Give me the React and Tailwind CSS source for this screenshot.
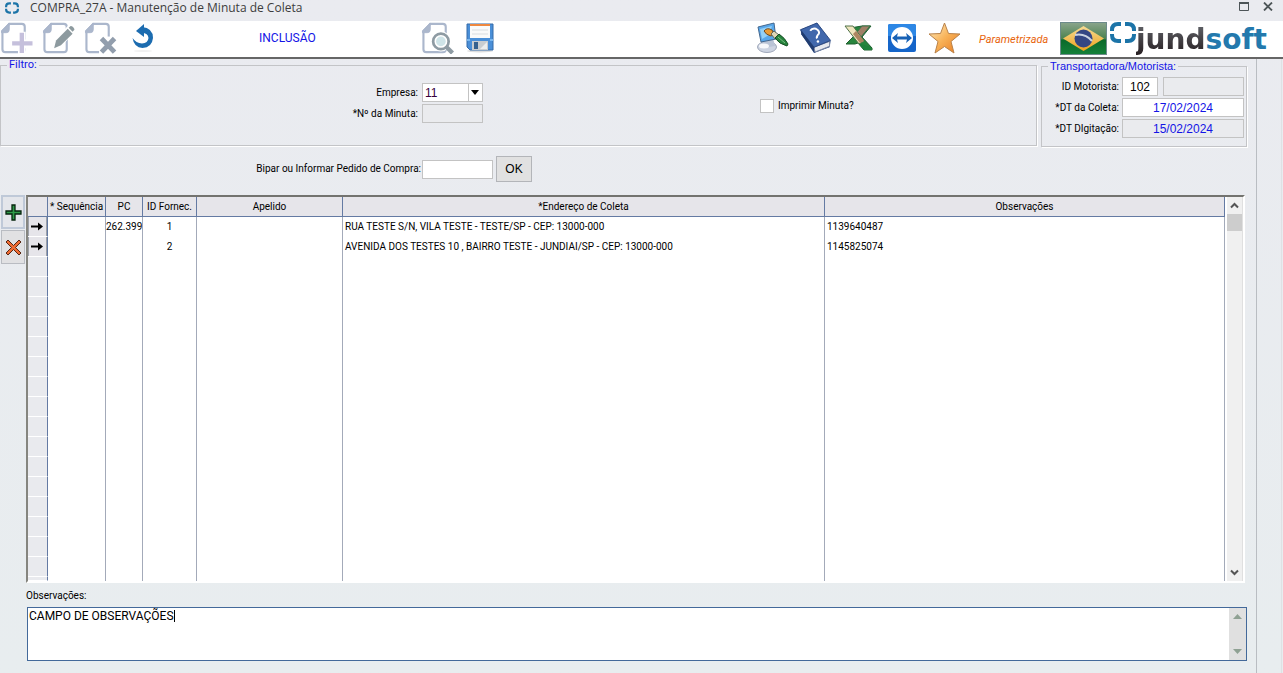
import React from 'react';

const narrow = "font-['Roboto',sans-serif]";

function Page({ children }) {
  return (
    <svg viewBox="0 0 33 33" className="h-8 w-[33px]">
      <path d="M9 2H22Q25 2 25 5V28Q25 31 22 31H5Q2 31 2 28V10Z" fill="#fff" stroke="#abb7cc" strokeWidth="2.2" />
      <path d="M9 1V8Q9 11 6 11H1V9Z" fill="#abb7cc" stroke="#abb7cc" strokeWidth="1" />
      {children}
    </svg>
  );
}

function NewIcon() {
  return (
    <Page>
      <path d="M18 10H26V18H33V27H26V33H18V27H11V18H18Z" fill="#fff" />
      <path d="M22 11V32M12 22H33" stroke="#c5c0dc" strokeWidth="4.5" fill="none" />
    </Page>
  );
}

function EditIcon() {
  return (
    <Page>
      <path d="M11 28L12 19L27 3L34 9L19 26Z" fill="#fff" />
      <path d="M12 27L14 19L26 7L31 12L19 24Z" fill="#8d9a9f" />
      <path d="M27 6L29 4Q32 4 33 8L31 10Z" fill="#8d9a9f" />
    </Page>
  );
}

function RemoveIcon() {
  return (
    <Page>
      <path d="M15 15H33V33H15Z" fill="#fff" />
      <path d="M17.500 17L31 31M31 17L17.500 31" stroke="#929ead" strokeWidth="5" fill="none" />
    </Page>
  );
}

function PreviewIcon() {
  return (
    <Page>
      <circle cx="20" cy="20" r="10.5" fill="#fff" />
      <path d="M25 25L32 32" stroke="#8e9ba3" strokeWidth="4.5" />
      <circle cx="20" cy="20" r="8" fill="#fff" stroke="#8e9ba3" strokeWidth="2.8" />
      <circle cx="20" cy="20" r="5" fill="#cfe4e8" />
    </Page>
  );
}

function UndoIcon() {
  return (
    <svg viewBox="0 0 24 28" className="h-7 w-6">
      <ellipse cx="12" cy="27" rx="9" ry="1" fill="#f1f1f1" />
      <path d="M11 3Q22 4 22 14Q21 23.500 11.500 24Q3 23.500 1.500 14Q5 19 11 19.500Q17 19 17.500 14Q17 9 11 9Z" fill="#1c6cb0" />
      <path d="M5 7L13 0V13Z" fill="#1c6cb0" />
    </svg>
  );
}

function SaveIcon() {
  return (
    <svg viewBox="0 0 28 30" className="h-[30px] w-7">
      <ellipse cx="14" cy="28" rx="13" ry="1.5" fill="#ddd" />
      <path d="M1 1H27V27H4L1 24Z" fill="#4a8fd8" stroke="#356ba8" />
      <path d="M4 1H24V15H4Z" fill="#fafafa" />
      <path d="M4 1H24V3H4Z" fill="#ee873e" />
      <path d="M6 7H22M6 11H22" stroke="#dadde0" />
      <path d="M6 18H22V27H6Z" fill="#c9cdd0" />
      <path d="M8 19H12V26H8Z" fill="#35618f" />
      <path d="M14 26L21 19V26Z" fill="#eceeee" />
      <path d="M1 17H4M24 17H27" stroke="#79b7ef" strokeWidth="2" />
    </svg>
  );
}

function PaintIcon() {
  return (
    <svg viewBox="0 0 33 32" className="h-8 w-[33px]">
      <ellipse cx="11" cy="25" rx="9.500" ry="5.5" fill="#cdd4e2" stroke="#a0a8ba" />
      <path d="M6 18L17 16L19 24L7 26Z" fill="#bac4d6" />
      <ellipse cx="8" cy="24" rx="5" ry="2.500" fill="#f7f8fb" />
      <path d="M2 5L18 1L20 17L5 20Z" fill="#58a7ea" stroke="#44678e" />
      <path d="M4 7L16 4L13 13L6 17Z" fill="#94d0f6" />
      <path d="M8 9Q11 5 16 8L18 12L15 14Q10 13 8 9Z" fill="#e89b35" stroke="#704a1d" />
      <path d="M15 12L18 9L23 13L19 17Z" fill="#ded6b5" stroke="#5f665f" />
      <path d="M19 16L23 12Q29 16 32 22L31 24Q23 22 19 16Z" fill="#26843d" stroke="#174d24" />
      <path d="M22 15L29 21" stroke="#78bb7f" />
    </svg>
  );
}

function BookIcon() {
  return (
    <svg viewBox="0 0 33 33" className="h-8 w-[33px]">
      <path d="M1 8L18 1L32 20L31 26L15 32L2 13Z" fill="#294780" />
      <path d="M15 26L31 20V25L16 31Z" fill="#e6e9ef" stroke="#7d89a5" />
      <path d="M1 8L18 1L32 19L15 26Z" fill="#4168ac" stroke="#2c4a82" />
      <path d="M2 9L15 26V31L2 13Z" fill="#203c70" />
      <path d="M11 9Q13 6 17 7Q21 9 20 12Q17 15 18 17" fill="none" stroke="#fff" strokeWidth="2" />
      <circle cx="19" cy="20" r="1.3" fill="#fff" />
    </svg>
  );
}

function SheetIcon() {
  return (
    <svg viewBox="0 0 30 28" className="h-7 w-[30px]">
      <path d="M18 2H27L18 13L28 24V26H20L14 19L11 20H2L10 12L6 4Z" fill="#27853d" stroke="#1e5e2d" />
      <path d="M18 2H26L17 13L13 8Z" fill="#a08067" stroke="#3e704a" />
      <path d="M1 2H9L20 17L15 20Z" fill="#eee4bd" stroke="#50734a" />
      <path d="M12 7L20 17L16 19L9 10Z" fill="#ad8561" />
      <path d="M17 20L27 23L28 26H20L15 20Z" fill="#1f813b" />
    </svg>
  );
}

function RemoteIcon() {
  return (
    <svg viewBox="0 0 28 28" className="size-7">
      <rect width="28" height="28" rx="2" fill="#1565c9" />
      <path d="M2 0H26Q28 0 28 2V12H0V2Q0 0 2 0Z" fill="#2d87e5" />
      <circle cx="14" cy="14" r="11" fill="#fff" />
      <path d="M4 14L10 9L9 12.500H19L18 9L24 14L18 19L19 15.500H9L10 19Z" fill="#1761b5" />
    </svg>
  );
}

function StarIcon() {
  return (
    <svg viewBox="0 0 33 32" className="h-8 w-[33px]">
      <defs>
        <linearGradient id="star" x1="0" y1="0" x2="1" y2="1">
          <stop offset="0" stopColor="#fff0c6" />
          <stop offset=".5" stopColor="#f8b258" />
          <stop offset="1" stopColor="#e8791f" />
        </linearGradient>
      </defs>
      <path d="M16.500 1L20.500 11.500L32 12L23 19.500L26 31L16.500 24.500L7 31L10 19.500L1 12L12.500 11.500Z" fill="url(#star)" stroke="#b9824a" />
    </svg>
  );
}

function FlagIcon() {
  return (
    <svg viewBox="0 0 47 33" className="h-[33px] w-[47px]">
      <defs>
        <linearGradient id="flag" x1="0" y1="0" x2="0" y2="1">
          <stop offset="0" stopColor="#8aa58c" />
          <stop offset=".5" stopColor="#4d8350" />
          <stop offset=".55" stopColor="#0b6a2b" />
          <stop offset="1" stopColor="#15813a" />
        </linearGradient>
        <linearGradient id="diamond" x1="0" y1="0" x2="0" y2="1">
          <stop offset="0" stopColor="#f7dc94" />
          <stop offset="1" stopColor="#eca21d" />
        </linearGradient>
      </defs>
      <rect x=".5" y=".5" width="46" height="32" fill="url(#flag)" stroke="#6d8b8b" />
      <path d="M23.500 4L44 16.500L23.500 29L3 16.500Z" fill="url(#diamond)" />
      <circle cx="23.500" cy="16.500" r="9" fill="#344783" />
      <path d="M15 13Q25 11 32 19" fill="none" stroke="#cbd4e1" strokeWidth="2" />
    </svg>
  );
}

function Mark({ className }) {
  return (
    <svg viewBox="0 0 26 21" className={className} fill="none" stroke="#1c74a8" strokeWidth="4">
      <path d="M11 2H8Q2 2 2 8V9M15 2H18Q24 2 24 8V9M2 12V13Q2 19 8 19H11M24 12V13Q24 19 18 19H15" />
    </svg>
  );
}

function ToolButton({ label, className = 'w-[33px]', children }) {
  return (
    <button type="button" aria-label={label} className={`flex h-8 shrink-0 items-center justify-center ${className}`}>
      {children}
    </button>
  );
}

const field = 'h-[19px] min-w-0 rounded-none border border-[#c3c3c3] text-[12px] leading-4 outline-none';
const th = 'overflow-hidden border-r border-b border-[#647aa3] bg-[#e6e5ea] p-0 font-normal whitespace-nowrap';
const td = 'overflow-hidden border-r border-[#a3aab9] p-0 whitespace-nowrap';

const rows = [
  { pc: '262.399', id: '1', address: 'RUA TESTE S/N, VILA TESTE - TESTE/SP - CEP: 13000-000', notes: '1139640487' },
  { pc: '', id: '2', address: 'AVENIDA DOS TESTES 10 , BAIRRO TESTE - JUNDIAI/SP - CEP: 13000-000', notes: '1145825074' },
];
const blanks = Array.from({ length: 17 }, (_, i) => i);

function Grid() {
  return (
    <div className="flex min-w-0 flex-1 border-2 border-t-[#73736f] border-r-white border-b-white border-l-[#85857f] bg-white">
      <div className="min-w-0 flex-1">
        <table className={`w-full table-fixed border-separate border-spacing-0 text-[10px] leading-4 ${narrow}`}>
          <colgroup>
            <col className="w-5" />
            <col className="w-[58px]" />
            <col className="w-[37px]" />
            <col className="w-[54px]" />
            <col className="w-[146px]" />
            <col className="w-[482px]" />
            <col />
          </colgroup>
          <thead>
            <tr className="h-5">
              <th className={th} aria-label="Seleção" />
              <th className={th}>* Sequência</th>
              <th className={th}>PC</th>
              <th className={th}>ID Fornec.</th>
              <th className={th}>Apelido</th>
              <th className={th}>*Endereço de Coleta</th>
              <th className={th}>Observações</th>
            </tr>
          </thead>
          <tbody>
            {rows.map((row) => (
              <tr key={row.id} className="h-5">
                <td className="border-r border-b border-r-[#647aa3] border-b-white bg-[#e6e5ea] p-0">
                  <svg viewBox="0 0 19 19" className="block h-[19px] w-[19px]">
                    <path d="M.5 0V19M18.500 0V19" stroke="#9da1a9" />
                    <path d="M3 9.500H12" stroke="#000" strokeWidth="2" />
                    <path d="M10 5.500L15 9.500L10 13.500Z" />
                  </svg>
                </td>
                <td className={td} />
                <td className={`${td} text-center`}>{row.pc}</td>
                <td className={`${td} text-center`}>{row.id}</td>
                <td className={td} />
                <td className={`${td} pl-0.5`}>{row.address}</td>
                <td className={`${td} pl-0.5`}>{row.notes}</td>
              </tr>
            ))}
            {blanks.map((i) => (
              <tr key={i} className="h-5 last:h-1">
                <td className="border-r border-b border-r-[#647aa3] border-b-white bg-[#e9eaee] p-0" />
                <td className={td} />
                <td className={td} />
                <td className={td} />
                <td className={td} />
                <td className={td} />
                <td className={td} />
              </tr>
            ))}
          </tbody>
        </table>
      </div>
      <div className="ml-0.5 flex w-4 flex-col border-r border-[#e0e0e0] bg-[#f0f0f0]">
        <button type="button" aria-label="Rolar para cima" className="flex h-[17px] items-center justify-center">
          <svg viewBox="0 0 9 7" className="h-[7px] w-[9px]" fill="none" stroke="#555" strokeWidth="2">
            <path d="M1 5.500L4.500 2L8 5.500" />
          </svg>
        </button>
        <div className="h-[17px] bg-[#cdcdcd]" />
        <div className="flex-1" />
        <button type="button" aria-label="Rolar para baixo" className="flex h-[17px] items-center justify-center">
          <svg viewBox="0 0 9 7" className="h-[7px] w-[9px]" fill="none" stroke="#555" strokeWidth="2">
            <path d="M1 1.500L4.500 5L8 1.500" />
          </svg>
        </button>
      </div>
    </div>
  );
}

export default function App() {
  return (
    <div className="flex min-h-screen flex-col bg-linear-to-b from-[#eaebf0] to-[#e8edef] font-['Liberation_Sans',Arial,sans-serif] text-[11px] leading-4 text-black">
      <header className="flex h-[21px] items-start">
        <Mark className="mt-0.5 ml-[5px] h-3 w-[14px]" />
        <h1 className="ml-[11px] font-['Open_Sans',sans-serif] text-[12px] leading-4 text-[#3d3d3d]">
          COMPRA_27A - Manutenção de Minuta de Coleta
        </h1>
        <button type="button" aria-label="Maximizar" className="mt-0.5 ml-auto">
          <svg viewBox="0 0 10 9" className="h-[9px] w-2.5">
            <path d="M.5 1V8.500H9.500V1" fill="none" stroke="#4d5558" />
            <path d="M0 1H10" stroke="#4d5558" strokeWidth="2" />
          </svg>
        </button>
        <button type="button" aria-label="Fechar" className="mt-0.5 mr-2.5 ml-[14px]">
          <svg viewBox="0 0 10 9" className="h-[9px] w-2.5">
            <path d="M1 .5L9 8.500M9 .5L1 8.500" stroke="#4d5558" strokeWidth="1.8" />
          </svg>
        </button>
      </header>

      <div className="flex h-[38px] items-start border-b-2 border-[#666] bg-white pt-px pr-4">
        <div className="flex gap-[9px]">
          <ToolButton label="Incluir"><NewIcon /></ToolButton>
          <ToolButton label="Alterar"><EditIcon /></ToolButton>
          <ToolButton label="Excluir"><RemoveIcon /></ToolButton>
          <ToolButton label="Desfazer"><UndoIcon /></ToolButton>
        </div>
        <span className={`ml-[100px] w-[162px] pt-2 text-[12px] text-[#1414e6] ${narrow}`}>INCLUSÃO</span>
        <div className="flex gap-3">
          <ToolButton label="Visualizar"><PreviewIcon /></ToolButton>
          <ToolButton label="Salvar" className="w-7"><SaveIcon /></ToolButton>
        </div>
        <div className="ml-auto flex items-start">
          <div className="flex gap-[10px]">
            <ToolButton label="Personalizar"><PaintIcon /></ToolButton>
            <ToolButton label="Ajuda"><BookIcon /></ToolButton>
            <ToolButton label="Exportar"><SheetIcon /></ToolButton>
            <ToolButton label="Acesso remoto"><RemoteIcon /></ToolButton>
            <ToolButton label="Favoritos"><StarIcon /></ToolButton>
          </div>
          <span className={`ml-[18px] w-[81px] pt-2.5 text-[11px] text-[#e8640c] italic ${narrow}`}>Parametrizada</span>
          <FlagIcon />
          <div className="ml-[3px] flex h-[33px] items-start">
            <Mark className="h-[21px] w-[26px]" />
            <span className="pt-0.5 font-['DejaVu_Sans',sans-serif] text-[28px] leading-8 font-bold text-[#2379ad]">
              <span className="bg-linear-to-b from-[#64676d] to-[#251d20] bg-clip-text text-transparent">jund</span>soft
            </span>
          </div>
        </div>
      </div>

      <div className="flex flex-1">
        <main className="min-w-0 flex-1 border-r border-[#b9bdc2]">
          <div className="flex gap-1 pr-[9px]">
            <fieldset className="h-[87px] min-w-0 flex-1 border border-[#c3c4c7] shadow-[1px_1px_0_#fff]">
              <legend className={`ml-1.5 h-3 px-0.5 leading-3 text-[#1414e6] ${narrow}`}>Filtro:</legend>
              <div className={`flex pt-3 text-[10px] ${narrow}`}>
                <div className="grid w-[482px] grid-cols-[1fr_61px] items-center gap-x-1 gap-y-0.5 text-right">
                  <label htmlFor="company">Empresa:</label>
                  <div className="relative">
                    <select id="company" className={`${field} block w-full appearance-none bg-white pl-0.5 font-['Liberation_Sans',sans-serif] text-[#37003c]`}>
                      <option>11</option>
                    </select>
                    <svg viewBox="0 0 14 17" className="pointer-events-none absolute top-px right-px h-[17px] w-[14px]">
                      <path d="M.5 0V17" stroke="#c3c3c3" />
                      <path d="M3 6H11L7 11Z" />
                    </svg>
                  </div>
                  <label htmlFor="number">*Nº da Minuta:</label>
                  <input id="number" disabled className={`${field} w-full bg-[#eaebee]`} />
                </div>
                <label className="ml-[277px] flex items-center gap-1 pt-1.5">
                  <input type="checkbox" className="size-[14px] appearance-none border border-[#c3c3c3] bg-white checked:bg-[#647aa3]" />
                  Imprimir Minuta?
                </label>
              </div>
            </fieldset>
            <fieldset className="h-[88px] w-[206px] border border-[#c3c4c7] shadow-[1px_1px_0_#fff]">
              <legend className="ml-1.5 h-[14px] px-0.5 leading-[14px] text-[#1414e6]">Transportadora/Motorista:</legend>
              <div className={`grid grid-cols-[1fr_122px] items-center gap-x-[3px] gap-y-0.5 pt-1 pr-0.5 text-right text-[10px] ${narrow}`}>
                <label htmlFor="driver">ID Motorista:</label>
                <div className="flex gap-[5px] font-['Liberation_Sans',sans-serif]">
                  <input id="driver" defaultValue="102" className={`${field} w-9 bg-white text-center`} />
                  <input aria-label="Nome do motorista" disabled className={`${field} flex-1 bg-[#eaebee]`} />
                </div>
                <label htmlFor="pickup">*DT da Coleta:</label>
                <input id="pickup" defaultValue="17/02/2024" className={`${field} w-full bg-white text-center font-['Liberation_Sans',sans-serif] text-[#1414e6]`} />
                <label htmlFor="typed">*DT DIgitação:</label>
                <input id="typed" readOnly defaultValue="15/02/2024" className={`${field} w-full bg-[#eaebee] text-center font-['Liberation_Sans',sans-serif] text-[#1414e6]`} />
              </div>
            </fieldset>
          </div>

          <form className="mt-[9px] flex items-center" onSubmit={(e) => e.preventDefault()}>
            <label htmlFor="order" className={`w-[422px] pr-px text-right text-[10px] whitespace-nowrap ${narrow}`}>Bipar ou Informar Pedido de Compra:</label>
            <input id="order" className={`${field} w-[71px] bg-white`} />
            <button type="submit" className="ml-[3px] h-[26px] w-9 border border-[#b3b5b9] bg-[#e1e1e1] text-[12px]">OK</button>
          </form>

          <div className="mt-[13px] flex items-start pr-[11px] pl-px">
            <div className="flex w-[25px] flex-col gap-px">
              <button type="button" aria-label="Adicionar linha" className="flex h-[34px] w-6 items-center justify-center border-2 border-[#bfc9d8] bg-[#e4e6eb]">
                <svg viewBox="0 0 17 17" className="size-[17px] shrink-0">
                  <path d="M7 1H10V7H16V10H10V16H7V10H1V7H7Z" fill="#2f9b49" stroke="#06260e" strokeWidth="1.3" />
                </svg>
              </button>
              <button type="button" aria-label="Remover linha" className="flex h-[34px] w-6 items-center justify-center border border-[#b9bcc2] bg-[#e1e1e3]">
                <svg viewBox="0 0 17 17" className="size-[17px] shrink-0">
                  <path d="M3 1L8.500 6.500L14 1L16 3L10.500 8.500L16 14L14 16L8.500 10.500L3 16L1 14L6.500 8.500L1 3Z" fill="#ef6b32" stroke="#572613" />
                </svg>
              </button>
            </div>
            <Grid />
          </div>

          <div className="mt-[5px] pr-[9px] pl-[26px]">
            <label htmlFor="notes" className={`block text-[10px] ${narrow}`}>Observações:</label>
            <div className="relative mt-[3px] ml-px flex h-[54px] border border-[#43699a] bg-white">
              <textarea
                id="notes"
                defaultValue="CAMPO DE OBSERVAÇÕES"
                className={`min-w-0 flex-1 resize-none overflow-hidden pl-px text-[12px] leading-4 outline-none ${narrow}`}
              />
              <span className="pointer-events-none absolute top-0.5 left-[146px] h-3 w-px bg-black" />
              <div className="flex w-[17px] flex-col justify-between bg-[#e0e0e0]">
                <button type="button" aria-label="Subir texto" className="flex h-[17px] items-center justify-center">
                  <svg viewBox="0 0 9 5" className="h-[5px] w-[9px]"><path d="M0 5L4.500 0L9 5Z" fill="#8fa193" /></svg>
                </button>
                <button type="button" aria-label="Descer texto" className="flex h-[17px] items-center justify-center">
                  <svg viewBox="0 0 9 5" className="h-[5px] w-[9px]"><path d="M0 0L4.500 5L9 0Z" fill="#8fa193" /></svg>
                </button>
              </div>
            </div>
          </div>
        </main>
        <aside className="mr-px w-[25px] border-r border-[#dfe1e4]" />
      </div>
    </div>
  );
}
